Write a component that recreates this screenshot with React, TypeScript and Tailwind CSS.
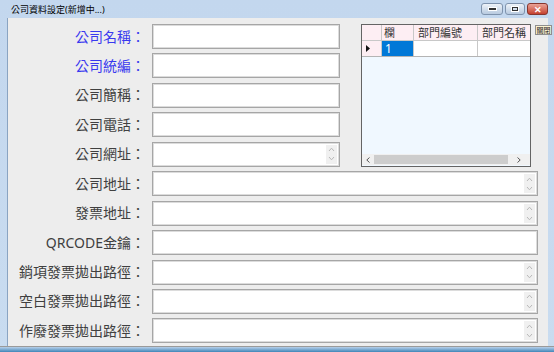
import type { ReactNode } from 'react';

const FONT = '"Noto Sans", "Noto Sans CJK TC", sans-serif';

type Field = { label: string; blue?: boolean; spin?: boolean };

const TOP_FIELDS: Field[] = [
  { label: '公司名稱', blue: true },
  { label: '公司統編', blue: true },
  { label: '公司簡稱' },
  { label: '公司電話' },
  { label: '公司網址', spin: true },
];

const WIDE_FIELDS: Field[] = [
  { label: '公司地址', spin: true },
  { label: '發票地址', spin: true },
  { label: 'QRCODE金鑰' },
  { label: '銷項發票拋出路徑', spin: true },
  { label: '空白發票拋出路徑', spin: true },
  { label: '作廢發票拋出路徑', spin: true },
];

function Spin() {
  return (
    <div className="absolute right-[2px] top-[2px] bottom-[2px] w-[11px] bg-[#f0f0f0] flex flex-col items-center justify-around">
      <svg width="7" height="5" viewBox="0 0 7 5">
        <path d="M1 4 L3.5 1.2 L6 4" fill="none" stroke="#b8b8b8" strokeWidth="1" />
      </svg>
      <svg width="7" height="5" viewBox="0 0 7 5">
        <path d="M1 1 L3.5 3.8 L6 1" fill="none" stroke="#b8b8b8" strokeWidth="1" />
      </svg>
    </div>
  );
}

function Row({ field, width }: { field: Field; width: string }) {
  return (
    <div className="flex items-center h-[25px]">
      <div
        className={`w-[137px] shrink-0 text-right text-[14px] leading-none ${
          field.blue ? 'text-[#3939ef]' : 'text-[#404040]'
        }`}
      >
        {field.label}：
      </div>
      <div
        className={`relative ml-[7px] h-[25px] ${width} bg-white border border-[#a6a6a6] shadow-[inset_0_0_0_1px_#dcdcdc]`}
      >
        {field.spin && <Spin />}
      </div>
    </div>
  );
}

function WinButton({ children, w, red }: { children: ReactNode; w: string; red?: boolean }) {
  return (
    <div
      className={`${w} h-[12px] rounded-[3px] border flex items-center justify-center ${
        red
          ? 'border-[#86362e] bg-gradient-to-b from-[#e9a196] to-[#c43f2e]'
          : 'border-[#7f93ad] bg-gradient-to-b from-[#eef3f9] to-[#b8cae0]'
      }`}
    >
      {children}
    </div>
  );
}

function DataGrid() {
  return (
    <div className="w-[170px] h-[143px] border border-[#646464] bg-[#f0f8ff] flex flex-col text-[11px] leading-none text-[#333]">
      <div className="flex h-[16px] bg-[#fdeef3] border-b border-[#c8c8c8]">
        <div className="w-[20px] border-r border-[#c8c8c8]" />
        <div className="w-[32px] border-r border-[#c8c8c8] flex items-center pl-[2px]">欄</div>
        <div className="w-[64px] border-r border-[#c8c8c8] flex items-center pl-[4px]">部門編號</div>
        <div className="flex-1 flex items-center pl-[4px] whitespace-nowrap overflow-hidden">部門名稱</div>
      </div>
      <div className="flex h-[16px] border-b border-[#b4b4b4] bg-white">
        <div className="w-[20px] bg-[#fdeef3] border-r border-[#c8c8c8] flex items-center pl-[4px]">
          <svg width="4" height="7" viewBox="0 0 4 7">
            <path d="M0 0 L4 3.5 L0 7 Z" fill="#111" />
          </svg>
        </div>
        <div className="w-[32px] bg-[#0078d7] text-white text-[12px] flex items-center pl-[3px] border-r border-[#c8c8c8]">1</div>
        <div className="w-[64px] border-r border-[#c8c8c8]" />
        <div className="flex-1" />
      </div>
      <div className="flex-1" />
      <div className="h-[11px] mb-[1px] flex items-center bg-[#f0f0f0] text-[#555]">
        <div className="w-[12px] flex justify-center">
          <svg width="4" height="6" viewBox="0 0 4 6">
            <path d="M3.5 0.5 L0.8 3 L3.5 5.5" fill="none" stroke="#555" strokeWidth="1" />
          </svg>
        </div>
        <div className="w-[134px] h-[9px] bg-[#cdcdcd]" />
        <div className="flex-1 flex justify-center">
          <svg width="4" height="6" viewBox="0 0 4 6">
            <path d="M0.5 0.5 L3.2 3 L0.5 5.5" fill="none" stroke="#555" strokeWidth="1" />
          </svg>
        </div>
      </div>
    </div>
  );
}

export default function App() {
  return (
    <div
      className="w-[554px] h-[352px] bg-gradient-to-b from-[#c3d7ee] to-[#c9dcf0] flex flex-col overflow-hidden"
      style={{ fontFamily: FONT }}
    >
      <div className="h-[18px] shrink-0 flex items-center pl-[11px] pr-[6px]">
        <span className="text-[9px] leading-none text-black">公司資料設定(新增中...)</span>
        <div className="ml-auto flex gap-[2px] items-center">
          <WinButton w="w-[22px]">
            <div className="w-[7px] h-[2px] bg-[#333] border border-white box-content" />
          </WinButton>
          <WinButton w="w-[20px]">
            <div className="w-[6px] h-[4px] border border-[#333] shadow-[0_0_0_1px_#fff]" />
          </WinButton>
          <WinButton w="w-[21px]" red>
            <span className="text-[9px] leading-none font-bold text-white">✕</span>
          </WinButton>
        </div>
      </div>

      <div className="flex-1 ml-[7px] mr-[6px] bg-[#ededed] border-l border-[#8aa4c2] pt-[6px] flex flex-col gap-[4.4px]">
        <div className="flex">
          <div className="flex flex-col gap-[4.4px]">
            {TOP_FIELDS.map(f => (
              <Row key={f.label} field={f} width="w-[188px]" />
            ))}
          </div>
          <div className="ml-[21px]">
            <DataGrid />
          </div>
          <div className="ml-[4px] mt-[1px] w-[17px] h-[10px] shrink-0 bg-[#fbf3d2] border border-[#8f8f8f] flex items-center justify-center text-[7px] leading-none text-[#222] whitespace-nowrap">
            關閉
          </div>
        </div>
        {WIDE_FIELDS.map(f => (
          <Row key={f.label} field={f} width="w-[386px]" />
        ))}
      </div>
      <div className="h-[6px] shrink-0 border-t border-[#9a9a9a] bg-gradient-to-b from-[#b7d0ea] to-[#3f86b8]" />
    </div>
  );
}
